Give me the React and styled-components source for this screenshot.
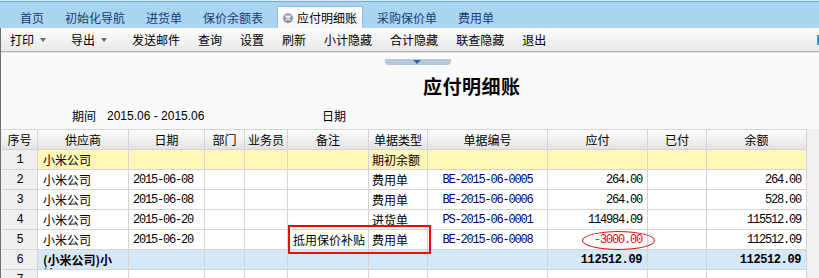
import React from "react";
import styled, { createGlobalStyle } from "styled-components";

const GlobalStyle = createGlobalStyle`
  html, body {
    margin: 0;
    padding: 0;
    height: 278px;
    overflow: hidden;
    background: #fafafa;
  }
  body {
    font-family: "Noto Sans CJK SC", "Liberation Sans", sans-serif;
    font-size: 12px;
    color: #000;
  }
`;

const COLS = "36px 91px 76px 40px 43px 81px 59px 120px 100px 59px 100px";

const Page = styled.div`
  width: 819px;
  height: 278px;
  overflow: hidden;
`;

const TabBar = styled.div`
  box-sizing: border-box;
  height: 28px;
  display: flex;
  align-items: flex-end;
  gap: 1px;
  padding-left: 10px;
  background: #a9d5f1;
  border-top: 1px solid #dcebf7;
  box-shadow: inset 0 1px 0 #6eb0e2;
`;

const Tab = styled.div`
  box-sizing: border-box;
  height: 22px;
  display: flex;
  align-items: center;
  gap: 4px;
  padding: ${(p) => (p.$active ? "0 5px" : "0 10px")};
  margin: ${(p) => (p.$active ? "0 3px" : "0")};
  color: ${(p) => (p.$active ? "#000" : "#1c3b74")};
  background: ${(p) =>
    p.$active ? "linear-gradient(#ffffff, #f6f6f6)" : "transparent"};
  border: ${(p) => (p.$active ? "1px solid #8fbde0" : "none")};
  border-bottom: none;
  border-radius: 2px 2px 0 0;
  white-space: nowrap;
`;

const Body = styled.div`
  border-left: 1px solid #6e6e6e;
  height: 250px;
`;

const Toolbar = styled.div`
  box-sizing: border-box;
  height: 24px;
  display: flex;
  align-items: center;
  background: linear-gradient(#fdfdfd, #e8e8e8);
  border-bottom: 1px solid #b6b6b6;
`;

const ToolButton = styled.div`
  display: flex;
  align-items: center;
  gap: 6px;
  padding: ${(p) => (p.$menu ? "0 16px 0 9px" : "0 9px")};
  white-space: nowrap;
`;

const Caret = styled.span`
  width: 0;
  height: 0;
  border-left: 3px solid transparent;
  border-right: 3px solid transparent;
  border-top: 4px solid #6d6d6d;
`;

const EdgeMark = styled.span`
  margin-left: auto;
  width: 2px;
  height: 10px;
  background: #3496e6;
`;

const HeaderArea = styled.div`
  border-top: 1px solid #e0e0e0;
  height: 76px;
  display: grid;
  grid-template-rows: 12px 42px 16px 6px;
  background: #fafafa;
`;

const HandleRow = styled.div`
  padding: 6px 0 0 384px;
`;

const Handle = styled.div`
  box-sizing: border-box;
  width: 66px;
  height: 6px;
  padding: 1px 3px 0 0;
  display: flex;
  justify-content: center;
  align-items: flex-start;
  background: #b8c8dc;
  border-radius: 0 0 4px 4px;
`;

const HandleArrow = styled.span`
  width: 0;
  height: 0;
  border-left: 4px solid transparent;
  border-right: 4px solid transparent;
  border-top: 4px solid #2a62b2;
`;

const TitleRow = styled.div`
  display: flex;
  align-items: center;
  padding-left: 422px;
`;

const Title = styled.h1`
  margin: 0;
  font-size: 19px;
  font-weight: 700;
  letter-spacing: 0.5px;
  line-height: 20px;
`;

const PeriodRow = styled.div`
  display: grid;
  grid-template-columns: 250px auto;
  align-items: center;
  padding-left: 71px;
`;

const Field = styled.div`
  display: flex;
  align-items: center;
  gap: 11px;
`;

const Latin = styled.span`
  font-family: "Liberation Sans", Arial, sans-serif;
  font-size: 12px;
`;

const TableArea = styled.div`
  background: #f0f0f0;
  padding-left: 1px;
`;

const Row = styled.div`
  position: relative;
  display: grid;
  grid-template-columns: ${COLS};
  height: ${(p) => (p.$head ? "21px" : "20px")};
`;

const Cell = styled.div`
  box-sizing: border-box;
  display: flex;
  align-items: ${(p) => (p.$top ? "flex-start" : "center")};
  justify-content: ${(p) =>
    p.$align === "right"
      ? "flex-end"
      : p.$align === "center"
      ? "center"
      : "flex-start"};
  padding: ${(p) =>
    p.$align === "right"
      ? "0 5px 0 0"
      : p.$align === "center"
      ? "0"
      : `0 5px 0 ${p.$indent ?? 5}px`};
  border-right: 1px solid #d4d4d4;
  border-bottom: 1px solid #d4d4d4;
  background: ${(p) => p.$bg || "#fff"};
  color: ${(p) => p.$color || "#000"};
  white-space: ${(p) => (p.$wrap ? "normal" : "nowrap")};
  overflow: hidden;
  line-height: 14px;
`;

const HeadCell = styled(Cell)`
  justify-content: center;
  padding: 0;
  border-top: 1px solid #d4d4d4;
  background: linear-gradient(#fefefe, #e3e3e3);
`;

const IndexCell = styled(Cell)`
  justify-content: center;
  padding: 0;
  background: #efefef;
`;

const Mono = styled.span`
  font-family: "Liberation Mono", "DejaVu Sans Mono", monospace;
  font-size: 12px;
  letter-spacing: ${(p) => (p.$bold ? "-0.4px" : "-1.2px")};
  font-weight: ${(p) => (p.$bold ? 700 : 400)};
`;

const Subtotal = styled.span`
  display: block;
  padding: 3px 6px 0 0;
  line-height: 14px;
  font-weight: 700;
`;

const NoteBox = styled.div`
  position: absolute;
  z-index: 2;
  left: 286px;
  top: -5px;
  width: 143px;
  height: 29px;
  box-sizing: border-box;
  border: 2px solid #ee0a0a;
  pointer-events: none;
`;

const Ring = styled.div`
  position: absolute;
  z-index: 2;
  left: 580px;
  top: 1px;
  width: 73px;
  height: 19px;
  box-sizing: border-box;
  border: 1px solid #f01010;
  border-radius: 50%;
  pointer-events: none;
`;

const CloseIcon = () => (
  <svg width="10" height="10" viewBox="0 0 10 10">
    <defs>
      <linearGradient id="cg" x1="0" y1="0" x2="0" y2="1">
        <stop offset="0" stopColor="#a3afbf" />
        <stop offset="1" stopColor="#74849a" />
      </linearGradient>
    </defs>
    <circle cx="5" cy="5" r="5" fill="url(#cg)" />
    <path d="M3 3 L7 7 M7 3 L3 7" stroke="#fff" strokeWidth="1.5" strokeLinecap="round" />
  </svg>
);

const tabs = ["首页", "初始化导航", "进货单", "保价余额表", "应付明细账", "采购保价单", "费用单"];
const tools = [
  { label: "打印", menu: true },
  { label: "导出", menu: true },
  { label: "发送邮件" },
  { label: "查询" },
  { label: "设置" },
  { label: "刷新" },
  { label: "小计隐藏" },
  { label: "合计隐藏" },
  { label: "联查隐藏" },
  { label: "退出" },
];
const heads = ["序号", "供应商", "日期", "部门", "业务员", "备注", "单据类型", "单据编号", "应付", "已付", "余额"];

const rows = [
  { no: 1, sup: "小米公司", type: "期初余额", bg: "#fff6b8" },
  { no: 2, sup: "小米公司", date: "2015-06-08", type: "费用单", doc: "BE-2015-06-0005", pay: "264.00", bal: "264.00" },
  { no: 3, sup: "小米公司", date: "2015-06-08", type: "费用单", doc: "BE-2015-06-0006", pay: "264.00", bal: "528.00" },
  { no: 4, sup: "小米公司", date: "2015-06-20", type: "进货单", doc: "PS-2015-06-0001", pay: "114984.09", bal: "115512.09" },
  { no: 5, sup: "小米公司", date: "2015-06-20", note: "抵用保价补贴", type: "费用单", doc: "BE-2015-06-0008", pay: "-3000.00", bal: "112512.09", mark: true },
  { no: 6, total: "(小米公司)小计:", pay: "112512.09", bal: "112512.09", bg: "#d5e8f8", bold: true },
  { no: 7 },
];

export default function App() {
  return (
    <Page>
      <GlobalStyle />
      <TabBar>
        {tabs.map((t) => (
          <Tab key={t} $active={t === "应付明细账"}>
            {t === "应付明细账" && <CloseIcon />}
            {t}
          </Tab>
        ))}
      </TabBar>
      <Body>
        <Toolbar>
          {tools.map((b) => (
            <ToolButton key={b.label} $menu={b.menu}>
              {b.label}
              {b.menu && <Caret />}
            </ToolButton>
          ))}
          <EdgeMark />
        </Toolbar>
        <HeaderArea>
          <HandleRow>
            <Handle>
              <HandleArrow />
            </Handle>
          </HandleRow>
          <TitleRow>
            <Title>应付明细账</Title>
          </TitleRow>
          <PeriodRow>
            <Field>
              期间
              <Latin>2015.06 - 2015.06</Latin>
            </Field>
            <Field>日期</Field>
          </PeriodRow>
          <div />
        </HeaderArea>
        <TableArea>
          <Row $head>
            {heads.map((h) => (
              <HeadCell key={h}>{h}</HeadCell>
            ))}
          </Row>
          {rows.map((r) => (
            <Row key={r.no}>
              <IndexCell>
                <Mono>{r.no}</Mono>
              </IndexCell>
              {r.total ? (
                <Cell $bg={r.bg} $wrap $top>
                  <Subtotal>{r.total}</Subtotal>
                </Cell>
              ) : (
                <Cell $bg={r.bg}>{r.sup}</Cell>
              )}
              <Cell $bg={r.bg} $indent={4}>
                <Mono>{r.date}</Mono>
              </Cell>
              <Cell $bg={r.bg} />
              <Cell $bg={r.bg} />
              <Cell $bg={r.bg}>{r.note}</Cell>
              <Cell $bg={r.bg} $indent={3}>{r.type}</Cell>
              <Cell $bg={r.bg} $align="center" $color="#000080">
                <Mono>{r.doc}</Mono>
              </Cell>
              <Cell $bg={r.bg} $align="right" $color={r.mark ? "#ff0000" : "#000"}>
                <Mono $bold={r.bold}>{r.pay}</Mono>
              </Cell>
              <Cell $bg={r.bg} $align="right" />
              <Cell $bg={r.bg} $align="right">
                <Mono $bold={r.bold}>{r.bal}</Mono>
              </Cell>
              {r.mark && (
                <>
                  <NoteBox />
                  <Ring />
                </>
              )}
            </Row>
          ))}
        </TableArea>
      </Body>
    </Page>
  );
}
